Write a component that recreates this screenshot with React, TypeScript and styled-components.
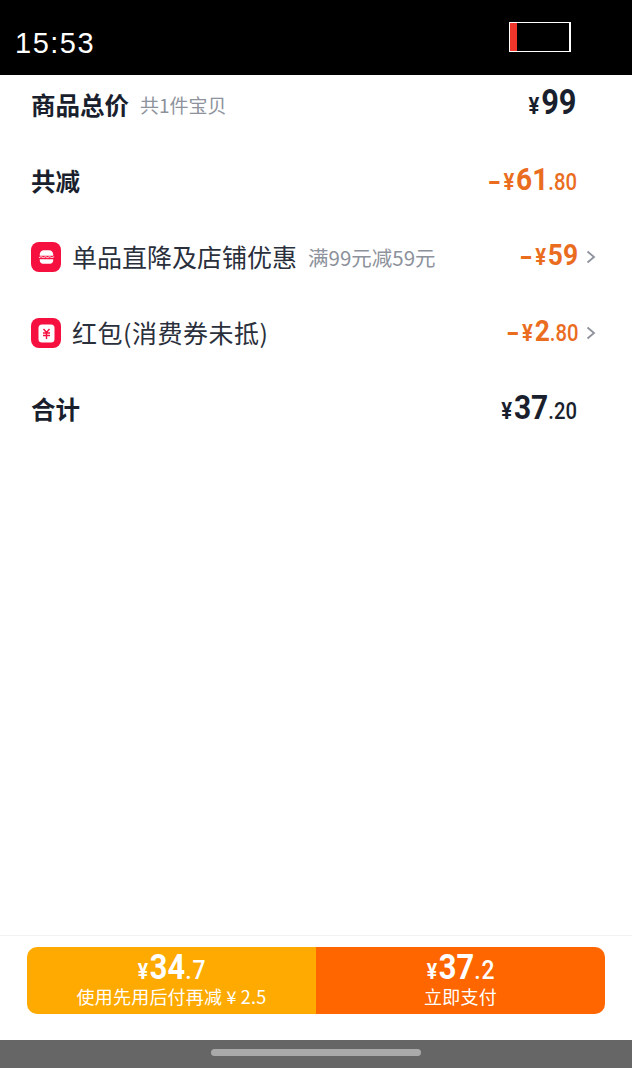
import React from 'react';
import styled, { createGlobalStyle } from 'styled-components';

const GlobalStyle = createGlobalStyle`
  html, body {
    margin: 0;
    padding: 0;
    background: #fff;
  }
  * {
    box-sizing: border-box;
  }
`;

const Page = styled.div`
  width: 632px;
  height: 1068px;
  display: flex;
  flex-direction: column;
  overflow: hidden;
  font-family: "Noto Sans CJK SC", "Noto Sans", sans-serif;
  color: #1a1f2e;
`;

// Status bar
const StatusBar = styled.div`
  height: 75px;
  flex: none;
  background: #000;
  display: flex;
  align-items: flex-start;
  justify-content: space-between;
  padding: 22px 61px 0 15px;
`;

const Clock = styled.span`
  color: #fff;
  font-family: "Liberation Sans", sans-serif;
  font-size: 29px;
  line-height: 42px;
  letter-spacing: 1.5px;
`;

const Battery = styled.div`
  width: 62px;
  height: 30px;
  border: 1px solid #fff;
  border-right-width: 2px;
  display: flex;
`;

const BatteryLevel = styled.div`
  width: 7px;
  background: #f0352a;
`;

// Price rows
const Rows = styled.div`
  flex: 1;
  display: flex;
  flex-direction: column;
  padding: 0 55px 0 31px;
`;

const Row = styled.div`
  height: 76px;
  flex: none;
  display: flex;
  align-items: center;
  justify-content: space-between;

  &:first-child {
    height: 60px;
    margin-bottom: 8px;
  }
`;

const Label = styled.div`
  display: flex;
  align-items: center;
`;

const Title = styled.span`
  font-size: 24.5px;
  font-weight: 700;
  line-height: 34px;
`;

const ItemTitle = styled.span<{ $spacing?: number }>`
  font-size: 25px;
  line-height: 34px;
  margin-bottom: 2px;
  letter-spacing: ${(p) => p.$spacing ?? 0}px;
  color: #2a2f3c;
`;

const Hint = styled.span<{ $size: number }>`
  font-size: ${(p) => p.$size}px;
  line-height: 30px;
  color: #8d929c;
  margin-left: 11px;
`;

const IconBox = styled.div`
  width: 30px;
  height: 30px;
  flex: none;
  margin: 0 11px 0 0;
  border-radius: 8px;
  background: #f5103f;
  display: flex;
  align-items: center;
  justify-content: center;
`;

// digits in the reference are a condensed DIN, so squeeze Roboto a bit
const Amount = styled.div<{ $tone: 'dark' | 'orange' }>`
  display: flex;
  align-items: baseline;
  margin-bottom: 4px;
  font-family: "Roboto", "Liberation Sans", sans-serif;
  font-weight: 700;
  color: ${(p) => (p.$tone === 'orange' ? '#ea6d1f' : '#1a1f2e')};
  transform: scaleX(0.88);
  transform-origin: right center;
`;

const Minus = styled.span`
  display: inline-block;
  font-size: 23px;
  font-weight: 900;
  margin-right: 5px;
  transform: scaleX(1.7);
`;

const Sign = styled.span`
  font-size: 23px;
  margin-right: 2px;
`;

const Big = styled.span<{ $size?: number }>`
  font-size: ${(p) => p.$size ?? 32}px;
  line-height: 40px;
`;

const Small = styled.span`
  font-size: 23px;
  font-weight: 500;
`;

const RightCell = styled.div`
  display: flex;
  align-items: center;
  gap: 8px;
  margin-right: -19px;
`;

// Bottom action bar
const ActionBar = styled.div`
  height: 105px;
  flex: none;
  border-top: 1px solid #f2f2f2;
  padding: 11px 27px 0;
`;

const ButtonGroup = styled.div`
  height: 67px;
  display: flex;
  border-radius: 10px;
  overflow: hidden;
`;

const PayButton = styled.div<{ $bg: string }>`
  flex: 1;
  padding-top: 2px;
  background: ${(p) => p.$bg};
  color: #fff;
  display: flex;
  flex-direction: column;
  align-items: center;
  justify-content: flex-start;
`;

const ButtonPrice = styled.div`
  height: 37px;
  display: flex;
  align-items: baseline;
  justify-content: center;
  font-family: "Roboto", "Liberation Sans", sans-serif;
  font-weight: 700;
  line-height: 37px;
  transform: scaleX(0.88);
`;

const ButtonYen = styled.span`
  font-size: 22px;
  margin-right: 2px;
`;

const ButtonBig = styled.span`
  font-size: 35px;
`;

const ButtonSmall = styled.span`
  font-size: 26px;
  font-weight: 500;
  letter-spacing: 1px;
`;

const ButtonNote = styled.div`
  font-size: 18px;
  line-height: 20px;
  letter-spacing: 0.2px;
`;

const HomeBar = styled.div`
  height: 28px;
  flex: none;
  background: #666;
  display: flex;
  align-items: flex-start;
  justify-content: center;
  padding-top: 9px;
`;

const HomeIndicator = styled.div`
  width: 210px;
  height: 7px;
  border-radius: 4px;
  background: #aaa;
`;

const BurgerIcon = () => (
  <svg width="17" height="16" viewBox="0 0 19 17">
    <path d="M2 7V5.500C2 3 4 1 6.500 1h6C15 1 17 3 17 5.500V7z" fill="#fff" />
    <path d="M1 9.200l2.500-1 2.500 1 2.500-1 2 1 2.500-1 2.500 1 2.500-1" stroke="#fff" strokeWidth="1" fill="none" />
    <path d="M2 11h15v1.500c0 1.900-1.600 3.500-3.500 3.500h-8C3.600 16 2 14.400 2 12.500z" fill="#fff" />
  </svg>
);

const YenIcon = () => (
  <svg width="17" height="19" viewBox="0 0 17 19">
    <rect x="0.500" y="0.500" width="16" height="18" rx="3.500" fill="#fff" />
    <path d="M5.500 5l3 3.500 3-3.500M5 9h7M5 11.500h7M8.500 8.500V15" stroke="#f5103f" strokeWidth="1.400" fill="none" />
  </svg>
);

const Chevron = () => (
  <svg width="10" height="14" viewBox="0 0 10 14">
    <path d="M1.500 1.500L8 7l-6.500 5.500" stroke="#8d929c" strokeWidth="1.800" fill="none" />
  </svg>
);

export default function App() {
  return (
    <Page>
      <GlobalStyle />
      <StatusBar>
        <Clock>15:53</Clock>
        <Battery>
          <BatteryLevel />
        </Battery>
      </StatusBar>
      <Rows>
        <Row>
          <Label>
            <Title>商品总价</Title>
            <Hint $size={19}>共1件宝贝</Hint>
          </Label>
          <Amount $tone="dark">
            <Sign>¥</Sign>
            <Big $size={35}>99</Big>
          </Amount>
        </Row>
        <Row>
          <Title>共减</Title>
          <Amount $tone="orange">
            <Minus>-</Minus>
            <Sign>¥</Sign>
            <Big>61</Big>
            <Small>.80</Small>
          </Amount>
        </Row>
        <Row>
          <Label>
            <IconBox>
              <BurgerIcon />
            </IconBox>
            <ItemTitle>单品直降及店铺优惠</ItemTitle>
            <Hint $size={20.500}>满99元减59元</Hint>
          </Label>
          <RightCell>
            <Amount $tone="orange">
              <Minus>-</Minus>
              <Sign>¥</Sign>
              <Big $size={30}>59</Big>
            </Amount>
            <Chevron />
          </RightCell>
        </Row>
        <Row>
          <Label>
            <IconBox>
              <YenIcon />
            </IconBox>
            <ItemTitle $spacing={0.500}>红包(消费券未抵)</ItemTitle>
          </Label>
          <RightCell>
            <Amount $tone="orange">
              <Minus>-</Minus>
              <Sign>¥</Sign>
              <Big $size={30}>2</Big>
              <Small>.80</Small>
            </Amount>
            <Chevron />
          </RightCell>
        </Row>
        <Row>
          <Title>合计</Title>
          <Amount $tone="dark">
            <Sign>¥</Sign>
            <Big $size={34}>37</Big>
            <Small>.20</Small>
          </Amount>
        </Row>
      </Rows>
      <ActionBar>
        <ButtonGroup>
          <PayButton $bg="#ffaa00">
            <ButtonPrice>
              <ButtonYen>¥</ButtonYen>
              <ButtonBig>34</ButtonBig>
              <ButtonSmall>.7</ButtonSmall>
            </ButtonPrice>
            <ButtonNote>使用先用后付再减 ¥ 2.5</ButtonNote>
          </PayButton>
          <PayButton $bg="#ff6600">
            <ButtonPrice>
              <ButtonYen>¥</ButtonYen>
              <ButtonBig>37</ButtonBig>
              <ButtonSmall>.2</ButtonSmall>
            </ButtonPrice>
            <ButtonNote>立即支付</ButtonNote>
          </PayButton>
        </ButtonGroup>
      </ActionBar>
      <HomeBar>
        <HomeIndicator />
      </HomeBar>
    </Page>
  );
}
